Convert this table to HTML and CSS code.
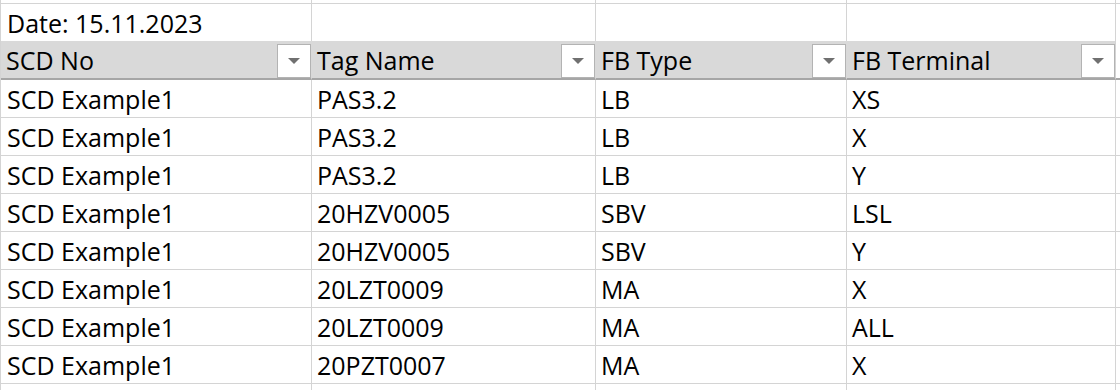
FILE: index.html
```html
<!DOCTYPE html>
<html lang="en">
<head>
<meta charset="utf-8">
<title>Sheet</title>
<link rel="stylesheet" href="styles.css">
</head>
<body>
<div class="sheet">
  <div class="row row-top">
    <div class="cell"></div><div class="cell"></div><div class="cell"></div><div class="cell"></div><div class="cell last"></div>
  </div>
  <div class="row row-date">
    <div class="cell">Date: 15.11.2023</div><div class="cell"></div><div class="cell"></div><div class="cell"></div><div class="cell last"></div>
  </div>
  <div class="row row-head">
    <div class="cell head"><span class="label">SCD No</span><span class="filter"><span class="arrow"></span></span></div>
    <div class="cell head"><span class="label">Tag Name</span><span class="filter"><span class="arrow"></span></span></div>
    <div class="cell head"><span class="label">FB Type</span><span class="filter"><span class="arrow"></span></span></div>
    <div class="cell head"><span class="label">FB Terminal</span><span class="filter"><span class="arrow"></span></span></div>
    <div class="cell last head-end"></div>
  </div>
  <div class="row"><div class="cell">SCD Example1</div><div class="cell">PAS3.2</div><div class="cell">LB</div><div class="cell">XS</div><div class="cell last"></div></div>
  <div class="row"><div class="cell">SCD Example1</div><div class="cell">PAS3.2</div><div class="cell">LB</div><div class="cell">X</div><div class="cell last"></div></div>
  <div class="row"><div class="cell">SCD Example1</div><div class="cell">PAS3.2</div><div class="cell">LB</div><div class="cell">Y</div><div class="cell last"></div></div>
  <div class="row"><div class="cell">SCD Example1</div><div class="cell">20HZV0005</div><div class="cell">SBV</div><div class="cell">LSL</div><div class="cell last"></div></div>
  <div class="row"><div class="cell">SCD Example1</div><div class="cell">20HZV0005</div><div class="cell">SBV</div><div class="cell">Y</div><div class="cell last"></div></div>
  <div class="row"><div class="cell">SCD Example1</div><div class="cell">20LZT0009</div><div class="cell">MA</div><div class="cell">X</div><div class="cell last"></div></div>
  <div class="row"><div class="cell">SCD Example1</div><div class="cell">20LZT0009</div><div class="cell">MA</div><div class="cell">ALL</div><div class="cell last"></div></div>
  <div class="row"><div class="cell">SCD Example1</div><div class="cell">20PZT0007</div><div class="cell">MA</div><div class="cell">X</div><div class="cell last"></div></div>
  <div class="row row-bottom"><div class="cell"></div><div class="cell"></div><div class="cell"></div><div class="cell"></div><div class="cell last"></div></div>
</div>
</body>
</html>
```
FILE: styles.css
```css
html, body {
  margin: 0;
  padding: 0;
  background: #ffffff;
  overflow: hidden;
}

body {
  font-family: "Open Sans", "Liberation Sans", sans-serif;
  font-size: 25px;
  color: #000000;
  width: 1120px;
  height: 390px;
}

.sheet {
  border-left: 1px solid #d4d4d4;
}

.row {
  display: grid;
  grid-template-columns: 311px 284px 251px 269px 1fr;
}

.cell {
  box-sizing: border-box;
  height: 38px;
  line-height: 37px;
  padding-left: 6px;
  padding-top: 1px;
  border-right: 1px solid #d4d4d4;
  border-bottom: 1px solid #d4d4d4;
  white-space: nowrap;
  overflow: hidden;
}

.cell.last {
  border-right: none;
}

.row-top .cell {
  height: 4px;
  padding-top: 0;
}

.row-bottom .cell {
  height: 6px;
  padding-top: 0;
  border-bottom: none;
}

.row-date .cell {
  height: 37px;
  border-bottom: none;
}

.row-head .cell {
  height: 39px;
  border-bottom: 2px solid #a6a6a6;
}

.cell.head {
  display: flex;
  align-items: flex-end;
  background: #d9d9d9;
  border-right: 1px solid #d9d9d9;
  padding-left: 5px;
  padding-top: 0;
}

.cell.head:nth-child(4) {
  border-right-color: #d4d4d4;
}

.cell.head-end {
  background: #ffffff;
}

.label {
  flex: 1;
  line-height: 37px;
  position: relative;
  top: 1px;
}

.filter {
  box-sizing: border-box;
  width: 34px;
  height: 34px;
  border: 1px solid #b3b3b3;
  background: #ffffff;
  display: flex;
  align-items: center;
  justify-content: center;
}

.arrow {
  width: 0;
  height: 0;
  border-left: 6px solid transparent;
  border-right: 6px solid transparent;
  border-top: 6px solid #707070;
}

.row .cell:nth-child(n+2) {
  padding-left: 5px;
}
```
